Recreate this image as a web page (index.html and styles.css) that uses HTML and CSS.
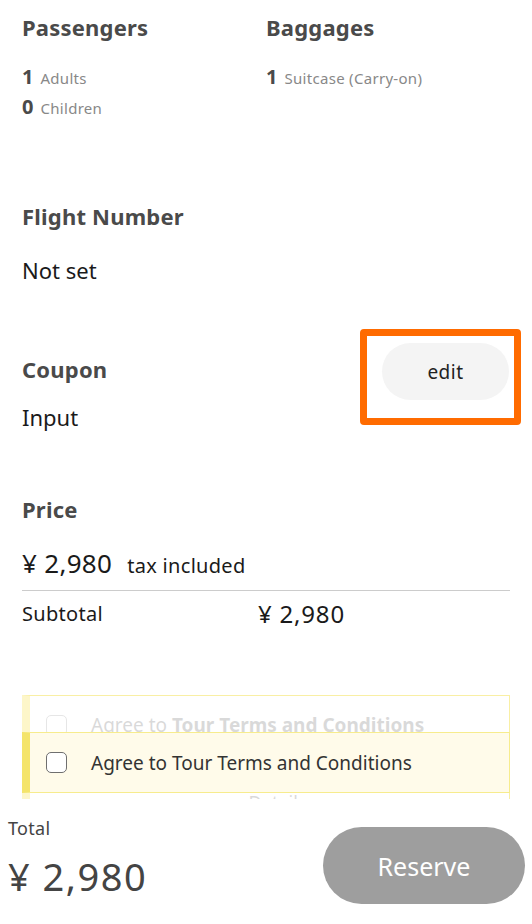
FILE: index.html
```html
<!DOCTYPE html>
<html lang="en">
<head>
<meta charset="utf-8">
<title>Reservation</title>
<link rel="stylesheet" href="styles.css">
</head>
<body>
<main class="page">
  <section class="pair">
    <div class="col">
      <h2 class="heading">Passengers</h2>
      <div class="counts">
        <div class="count"><span class="num">1</span><span class="label">Adults</span></div>
        <div class="count"><span class="num">0</span><span class="label">Children</span></div>
      </div>
    </div>
    <div class="col">
      <h2 class="heading">Baggages</h2>
      <div class="counts">
        <div class="count"><span class="num">1</span><span class="label">Suitcase (Carry-on)</span></div>
      </div>
    </div>
  </section>

  <section class="block flight">
    <h2 class="heading">Flight Number</h2>
    <p class="value">Not set</p>
  </section>

  <section class="block coupon">
    <div class="coupon-text">
      <h2 class="heading">Coupon</h2>
      <p class="value">Input</p>
    </div>
    <div class="edit-wrap">
      <button class="edit-btn" type="button">edit</button>
      <span class="focus-ring"></span>
    </div>
  </section>

  <section class="block price">
    <h2 class="heading">Price</h2>
    <div class="price-row"><span class="price-main">¥ 2,980</span><span class="tax">tax included</span></div>
    <div class="subtotal"><span>Subtotal</span><span class="subtotal-val">¥ 2,980</span></div>
  </section>

  <section class="terms">
    <div class="terms-faded">
      <div class="terms-row">
        <span class="box"></span>
        <span class="terms-text">Agree to <b>Tour Terms and Conditions</b></span>
      </div>
      <div class="terms-under">Details</div>
    </div>
    <label class="terms-focus">
      <span class="box dark"></span>
      <span class="terms-text">Agree to Tour Terms and Conditions</span>
    </label>
  </section>
</main>

<footer class="bar">
  <div class="total">
    <div class="total-label">Total</div>
    <div class="total-val">¥ 2,980</div>
  </div>
  <button class="reserve" type="button">Reserve</button>
</footer>
</body>
</html>
```

FILE: styles.css
```css
* { box-sizing: border-box; }
html, body { margin: 0; padding: 0; background: #fff; }
body {
  font-family: "Noto Sans", "Noto Sans CJK JP", sans-serif;
  color: #222;
}
.page {
  padding: 12px 22px 200px;
}
.heading {
  margin: 0;
  font-size: 22px;
  line-height: 30px;
  font-weight: 700;
  color: #4a4a4a;
  letter-spacing: 0.2px;
}
.pair {
  display: grid;
  grid-template-columns: 244px 1fr;
}
.counts { margin-top: 20px; }
.count {
  display: flex;
  align-items: baseline;
  gap: 7px;
  height: 30px;
  line-height: 30px;
}
.num {
  font-size: 20px;
  font-weight: 700;
  color: #4a4a4a;
}
.label {
  font-size: 15px;
  color: #888;
  letter-spacing: 0.3px;
}
.block { margin: 0; }
.flight { margin-top: 79px; }
.value {
  margin: 24px 0 0;
  font-size: 22px;
  line-height: 30px;
  color: #1a1a1a;
}
.coupon {
  margin-top: 69px;
  display: grid;
  grid-template-columns: 1fr auto;
}
.coupon .value { margin-top: 18px; }
.edit-wrap {
  position: relative;
  align-self: start;
  margin-top: -11px;
  margin-right: 1px;
}
.edit-btn {
  display: block;
  width: 127px;
  height: 57px;
  border: 0;
  border-radius: 29px;
  background: #f4f4f4;
  font-family: inherit;
  font-size: 19px;
  letter-spacing: 0.5px;
  color: #222;
}
.focus-ring {
  position: absolute;
  left: -22px;
  right: -12px;
  top: -14px;
  bottom: -25px;
  border: 7px solid #ff6b00;
  border-radius: 4px;
  pointer-events: none;
}
.price { margin-top: 62px; }
.price-row {
  margin-top: 22px;
  display: flex;
  align-items: baseline;
  gap: 15px;
  line-height: 34px;
  padding-bottom: 7px;
  border-bottom: 1px solid #ccc;
}
.price-main { font-size: 26px; color: #1a1a1a; letter-spacing: 0.3px; }
.tax { font-size: 20px; color: #1a1a1a; letter-spacing: 0.3px; }
.subtotal {
  margin-top: 8px;
  display: grid;
  grid-template-columns: 236px 1fr;
  line-height: 30px;
  font-size: 20px;
  color: #1a1a1a;
  letter-spacing: 0.3px;
}
.subtotal-val { font-size: 24px; letter-spacing: 0.8px; }

.terms {
  position: relative;
  margin-top: 66px;
}
.terms-faded {
  border: 1px solid #f9efa4;
  border-left: 8px solid #fdf6c9;
  padding: 14px 0 0 16px;
  height: 110px;
}
.terms-faded .terms-row,
.terms-faded .terms-under { opacity: 0.18; }
.terms-row {
  display: flex;
  align-items: center;
  gap: 24px;
  height: 30px;
}
.box {
  width: 21px;
  height: 21px;
  border: 1.5px solid #777;
  border-radius: 5px;
  background: #fff;
  flex: none;
}
.terms-text {
  font-size: 19px;
  color: #333;
}
.terms-under {
  margin-top: 50px;
  text-align: center;
  font-size: 18px;
  color: #333;
}
.terms-focus {
  position: absolute;
  left: 0;
  right: 0;
  top: 37px;
  height: 61px;
  display: flex;
  align-items: center;
  gap: 24px;
  padding-left: 16px;
  background: #fffbea;
  border: 1px solid #f7ec8d;
  border-left: 8px solid #f4e46a;
}
.box.dark { border-color: #6f6f6f; }

.bar {
  position: fixed;
  left: 0;
  right: 0;
  bottom: 0;
  height: 125px;
  background: #fff;
  display: flex;
  justify-content: space-between;
  align-items: flex-start;
  padding: 0 7px 0 8px;
}
.total { padding-top: 17px; }
.total-label {
  font-size: 18px;
  line-height: 24px;
  color: #444;
  letter-spacing: 0.3px;
}
.total-val {
  margin-top: 14px;
  font-size: 38px;
  line-height: 44px;
  color: #444;
  letter-spacing: 1.5px;
}
.reserve {
  margin-top: 28px;
  width: 202px;
  height: 77px;
  border: 0;
  border-radius: 39px;
  background: #9e9e9e;
  color: #fff;
  font-family: inherit;
  font-size: 25px;
}
```
